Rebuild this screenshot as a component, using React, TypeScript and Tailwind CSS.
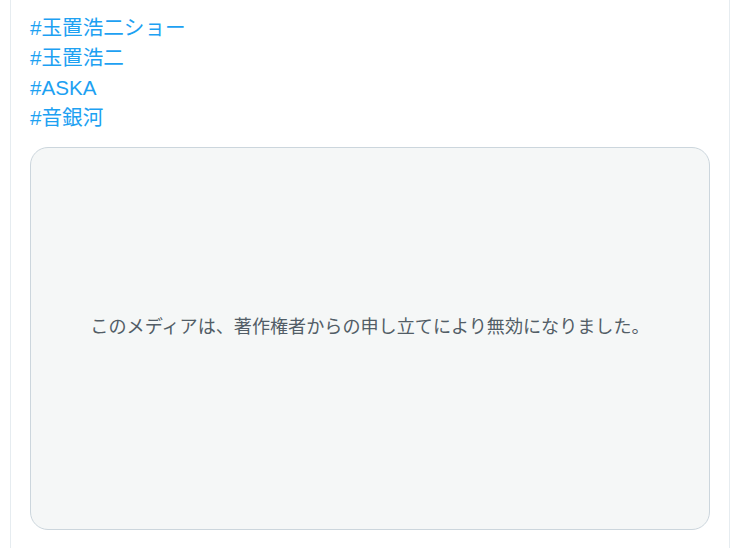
import React from "react";

const tags = ["#玉置浩二ショー", "#玉置浩二", "#ASKA", "#音銀河"];

export default function App() {
  return (
    <div className="w-[747px] h-[548px] overflow-hidden bg-white" style={{ fontFamily: '"Liberation Sans", "Noto Sans CJK JP", sans-serif' }}>
      <div className="ml-[10px] w-[720px] h-[548px] border-x border-[#e6ecf0] px-[19px] pt-[13px]">
        <div className="flex flex-col text-[20.6px] leading-[30px] text-[#1da1f2]">
          {tags.map((t) => (
            <div key={t}>{t}</div>
          ))}
        </div>
        <div className="mt-[14px] h-[383px] rounded-[18px] border border-[#ccd6dd] bg-[#f5f7f7] flex items-center justify-center pb-[22px]">
          <span className="text-[18.1px] text-[#525d66]">
            このメディアは、著作権者からの申し立てにより無効になりました。
          </span>
        </div>
      </div>
    </div>
  );
}
